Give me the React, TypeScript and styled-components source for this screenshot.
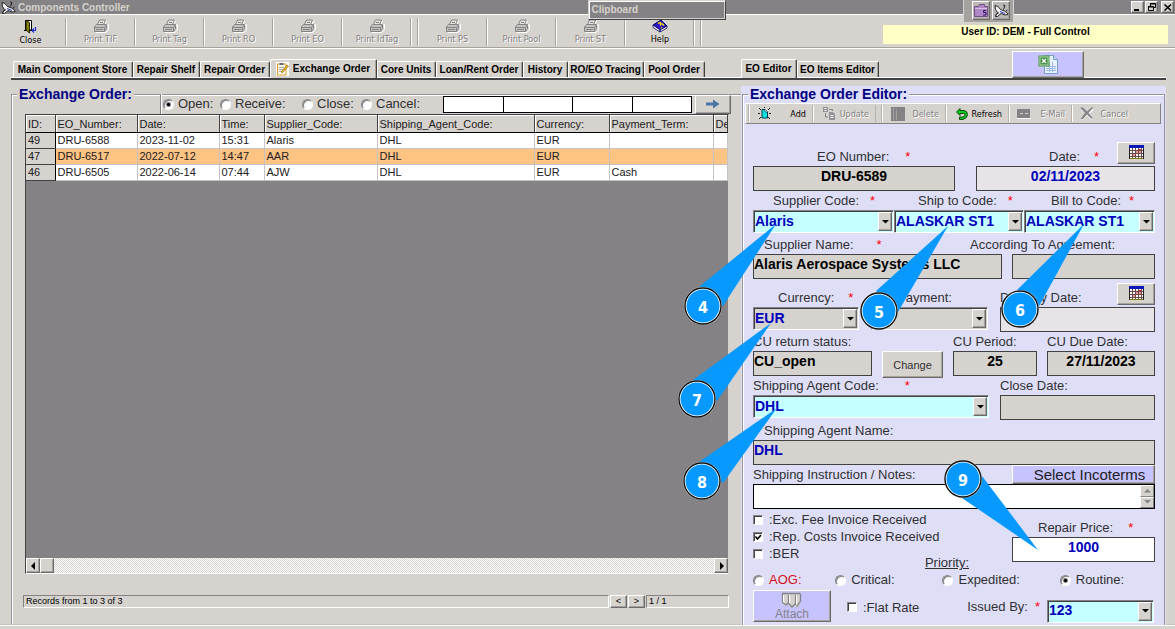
import React from "react";
import styled, { createGlobalStyle, css } from "styled-components";

const face = "#d6d3ce";
const shade = "#848284";
const dark = "#424142";
const lilac = "#dedff7";
const violet = "#c6c3ff";
const cyan = "#c6ffff";
const blue = "#0000bd";

const ui = `"DejaVu Sans Condensed", "DejaVu Sans", sans-serif`;
const sans = `"Liberation Sans", Arial, sans-serif`;

const GlobalStyle = createGlobalStyle`
  *, *::before, *::after { box-sizing: border-box; }
  body { margin: 0; background: ${face}; font-family: ${sans}; color: #000; }
  button, input, select, textarea { font: inherit; color: inherit; margin: 0; border-radius: 0; }
`;

const raised = css`
  border: 1px solid;
  border-color: #fff #6b696b #6b696b #fff;
  box-shadow: inset -1px -1px #a5a29c;
`;

const sunken = css`
  border: 1px solid;
  border-color: ${shade} #fff #fff ${shade};
`;

/* ---------- window frame ---------- */

const Page = styled.div`
  position: relative;
  display: flex;
  flex-direction: column;
  min-height: 100vh;
  overflow: hidden;
`;

const TitleBar = styled.header`
  display: flex;
  align-items: center;
  height: 15px;
  padding: 0 1px;
  gap: 2px;
  background: ${shade};
  border-bottom: 1px solid #fff;
  color: ${face};
  font: bold 10px/13px ${sans};
`;

const Title = styled.h1`
  flex: 1;
  margin: 0;
  font: inherit;
`;

const WindowButton = styled.button<{ $gap?: boolean }>`
  ${raised}
  display: grid;
  place-items: center;
  width: 13px;
  height: 12px;
  padding: 0;
  margin-left: ${(p) => (p.$gap ? 2 : 0)}px;
  margin-right: ${(p) => (p.$gap ? 0 : -1)}px;
  background: ${face};
`;

const Clipboard = styled.div`
  position: absolute;
  top: 0;
  left: 50%;
  width: 138px;
  height: 20px;
  padding: 3px 3px;
  background: ${shade};
  border: 1px solid ${face};
  border-right-color: ${dark};
  border-bottom-color: ${dark};
  box-shadow: inset 1px 1px #fff, inset -1px -1px ${face};
  color: ${face};
  font: bold 10px/12px ${sans};
`;

const QuickBar = styled.div`
  position: absolute;
  top: 0;
  right: 161px;
  display: flex;
  gap: 2px;
  height: 22px;
  padding: 1px 3px 2px 8px;
  background: #a5a2a0;
  border-left: 1px solid ${face};
  border-right: 1px solid ${face};
`;

const QuickButton = styled.button`
  ${raised}
  display: grid;
  place-items: center;
  width: 18px;
  padding: 0;
  background: #bdb8b8;
`;

const Toolbar = styled.nav`
  display: flex;
  height: 34px;
  border-bottom: 1px solid #fff;
  box-shadow: inset 0 -1px #a5a29c;
`;

const ToolCell = styled.div<{ $first?: boolean; $double?: boolean }>`
  flex: none;
  display: flex;
  width: ${(p) => (p.$first ? 67 : p.$double ? 76 : 69)}px;
  height: 28px;
  margin-top: 3px;
  padding-right: ${(p) => (p.$first ? 5 : p.$double ? 7 : 1)}px;
  border-right: 1px solid #fff;
  box-shadow: inset -1px 0 #a5a29c;
`;

const ToolButton = styled.button<{ $double?: boolean }>`
  flex: 1;
  display: flex;
  flex-direction: column;
  align-items: center;
  padding: 1px 0 0;
  border: 0;
  background: none;
  font: 9px/12px ${ui};
  box-shadow: ${(p) => (p.$double ? `1px 0 #fff, inset -1px 0 #a5a29c` : "none")};
  &:disabled {
    color: ${shade};
    text-shadow: 1px 1px #fff;
  }
`;

const UserBadge = styled.div`
  flex: 0 1 285px;
  height: 19px;
  margin: 10px 7px 0 auto;
  background: #ffffc6;
  font: bold 10px/13px ${sans};
  text-align: center;
`;

/* ---------- tab strips ---------- */

const TabRow = styled.div`
  display: grid;
  grid-template-columns: 730fr 425fr;
  height: 31px;
  margin: 0 9px 0 11px;
  border-bottom: 2px solid ${dark};
  box-shadow: inset 0 -1px #fff;
`;

const TabStrip = styled.div<{ $indent?: number }>`
  display: flex;
  align-items: flex-end;
  min-width: 0;
  padding-left: ${(p) => p.$indent || 0}px;
`;

const Tab = styled.button<{ $w: number; $active?: boolean }>`
  flex: none;
  display: flex;
  align-items: center;
  justify-content: center;
  gap: 4px;
  width: ${(p) => p.$w}px;
  height: ${(p) => (p.$active ? 19 : 16)}px;
  margin-bottom: ${(p) => (p.$active ? 0 : 1)}px;
  padding: 0 1px 0 0;
  background: ${face};
  border: solid;
  border-width: 1px 1px 0 1px;
  border-color: #fff ${dark} #fff #fff;
  border-radius: 2px 2px 0 0;
  box-shadow: inset -1px 0 #a5a29c;
  font: bold 10px/12px ${sans};
  white-space: nowrap;
`;

const ExcelButton = styled.button`
  ${raised}
  display: grid;
  place-items: center;
  width: 72px;
  height: 27px;
  margin-left: auto;
  margin-right: 82px;
  padding: 0;
  background: ${violet};
`;

/* ---------- main split ---------- */

const Main = styled.main`
  flex: 1;
  display: grid;
  grid-template-columns: 730fr 425fr;
  margin: 0 9px 0 11px;
  padding-top: 6px;
`;

const Footer = styled.footer`
  height: 4px;
  border-top: 1px solid #fff;
  box-shadow: 0 -1px #c6c3bd;
`;

const Group = styled.fieldset<{ $open?: boolean }>`
  display: flex;
  flex-direction: column;
  min-width: 0;
  margin: 0;
  padding: 0;
  border: 1px solid #949294;
  border-bottom: 0;
  border-right-width: ${(p) => (p.$open ? 0 : 1)}px;
  box-shadow: inset 1px 1px #fff;
`;

const Legend = styled.legend<{ $bg: string }>`
  margin-left: 5px;
  padding: 0 2px;
  background: ${(p) => p.$bg};
  color: #000084;
  font: bold 14px/16px ${sans};
`;

/* ---------- order list ---------- */

const FilterBar = styled.div`
  display: flex;
  align-items: center;
  height: 20px;
  margin: -8px 10px 0 148px;
  padding-left: 2px;
  border-left: 1px solid ${shade};
  box-shadow: inset 1px 0 #fff;
`;

const FilterOption = styled.label<{ $w: number }>`
  flex: none;
  display: flex;
  align-items: center;
  gap: 4px;
  width: ${(p) => p.$w}px;
  font: 13px/18px ${sans};
  color: #313031;
`;

const Radio = styled.input.attrs({ type: "radio" })`
  appearance: none;
  flex: none;
  width: 11px;
  height: 11px;
  border: 1px solid;
  border-color: ${shade} #fff #fff ${shade};
  border-radius: 50%;
  background: #fff;
  box-shadow: inset 1px 1px ${shade};
  &:checked {
    background: radial-gradient(circle, #000 0 1px, #fff 3px);
  }
`;

const FilterInputs = styled.div`
  flex: 1;
  display: grid;
  grid-template-columns: 60fr 70fr 60fr 60fr;
  height: 17px;
  border: 1px solid #000;
  margin: 1px 3px 0 0;
`;

const FilterInput = styled.input`
  width: 100%;
  min-width: 0;
  height: 15px;
  padding: 0 2px;
  border: 0;
  background: #fff;
  font-size: 11px;
  & + & {
    border-left: 1px solid #000;
  }
`;

const GoButton = styled.button`
  ${raised}
  display: grid;
  place-items: center;
  flex: none;
  width: 36px;
  height: 19px;
  padding: 0;
  background: ${face};
`;

const GridFrame = styled.div`
  flex: 1;
  display: flex;
  flex-direction: column;
  margin: 0 12px 0 13px;
  background: ${shade};
  border: 1px solid;
  border-color: ${dark} ${face} #fff ${dark};
`;

const GridBody = styled.div`
  flex: 1;
  overflow: hidden;
`;

const Table = styled.table`
  width: 100%;
  table-layout: fixed;
  border-collapse: collapse;
  font: 11px/14px ${sans};
  color: #212021;
`;

const HeadCell = styled.th`
  height: 17px;
  padding: 1px 0 0 2px;
  overflow: hidden;
  text-align: left;
  font-weight: normal;
  white-space: nowrap;
  background: ${face};
  border-right: 1px solid ${dark};
  border-bottom: 1px solid #000;
  box-shadow: inset 1px 1px #fff;
`;

const Row = styled.tr<{ $selected?: boolean }>`
  background: ${(p) => (p.$selected ? "#ffc384" : "#fff")};
`;

const Cell = styled.td`
  height: 16px;
  padding: 0 0 0 2px;
  border-right: 1px solid #c6c3c6;
  border-bottom: 1px solid #c6c3c6;
  white-space: nowrap;
  &:first-child {
    background: ${face};
    border-right-color: #000;
    border-bottom-color: ${dark};
  }
`;

const ScrollBar = styled.div`
  display: flex;
  height: 15px;
  background: repeating-conic-gradient(#fff 0 25%, ${face} 0 50%) 0 0 / 2px 2px;
`;

const ScrollButton = styled.button<{ $last?: boolean }>`
  ${raised}
  display: grid;
  place-items: center;
  width: 14px;
  height: 15px;
  padding: 0;
  margin-left: ${(p) => (p.$last ? "auto" : 0)};
  background: ${face};
`;

const StatusRow = styled.div`
  display: flex;
  gap: 1px;
  height: 13px;
  margin: 21px 12px 17px 11px;
  font: 9px/11px ${sans};
`;

const StatusBox = styled.div<{ $w?: number }>`
  ${sunken}
  flex: ${(p) => (p.$w ? `0 0 ${p.$w}px` : "1")};
  padding-left: 2px;
`;

const PageButton = styled.button`
  ${raised}
  width: 17px;
  padding: 0;
  background: ${face};
  font: 9px/9px ${sans};
`;

/* ---------- editor ---------- */

const EditorPanel = styled.section`
  position: relative;
  display: flex;
  flex-direction: column;
  min-width: 0;
  padding: 0 1px;
  background: ${lilac};
  & > fieldset {
    flex: 1;
  }
`;

const EditorBar = styled.div`
  display: flex;
  align-items: center;
  height: 21px;
  margin: 1px 3px 0 2px;
  padding-left: 2px;
  background: ${face};
  border: 1px solid;
  border-color: #fff ${shade} ${shade} #fff;
`;

const EditorTool = styled.button<{ $w: number; $gap: number }>`
  flex: none;
  display: flex;
  align-items: center;
  justify-content: flex-end;
  gap: ${(p) => p.$gap}px;
  width: ${(p) => p.$w}px;
  height: 17px;
  padding: 0 6px 0 0;
  border: 0;
  border-left: 1px solid #b5b2ad;
  box-shadow: inset 1px 0 #fff;
  background: none;
  font: 9px/12px ${ui};
  &:disabled {
    color: ${shade};
    text-shadow: 1px 1px #fff;
  }
`;

const BarGap = styled.span`
  width: 6px;
  height: 17px;
  border-left: 1px solid #b5b2ad;
`;

const Form = styled.div`
  display: flex;
  flex-direction: column;
  margin: 23px 9px 0 10px;
`;

const FormRow = styled.div<{ $cols: string; $gap?: number; $top?: number }>`
  display: grid;
  grid-template-columns: ${(p) => p.$cols};
  column-gap: ${(p) => p.$gap || 0}px;
  margin-top: ${(p) => p.$top || 0}px;
`;

const Field = styled.div`
  display: flex;
  flex-direction: column;
  min-width: 0;
`;

const LabelLine = styled.div<{ $indent?: number; $right?: number }>`
  display: flex;
  align-items: flex-end;
  justify-content: ${(p) => (p.$right === undefined ? "flex-start" : "flex-end")};
  height: 19px;
  padding-left: ${(p) => p.$indent || 0}px;
  padding-right: ${(p) => p.$right || 0}px;
  white-space: nowrap;
`;

const Label = styled.label`
  font: 13px/18px ${sans};
  color: #313031;
`;

const Star = styled.span<{ $gap: number }>`
  margin-left: ${(p) => p.$gap}px;
  color: #ff0000;
  font: 13px/18px ${sans};
`;

const TextBox = styled.input<{ $bg?: string; $ink?: string; $center?: boolean }>`
  width: 100%;
  height: 25px;
  padding: 0 0 5px 0;
  background: ${(p) => p.$bg || face};
  border: 1px solid ${dark};
  color: ${(p) => p.$ink || "#000"};
  font: bold 14px/18px ${sans};
  text-align: ${(p) => (p.$center ? "center" : "left")};
`;

const Combo = styled.div<{ $bg?: string }>`
  display: grid;
  height: 23px;
  margin-bottom: 2px;
  background: ${(p) => p.$bg || face};
  border: 1px solid;
  border-color: ${shade} #fff #fff ${shade};
  box-shadow: inset 1px 1px ${dark};
  & > * {
    grid-area: 1 / 1;
  }
`;

const Select = styled.select`
  appearance: none;
  width: 100%;
  height: 21px;
  padding: 0 16px 2px 1px;
  border: 0;
  background: none;
  color: ${blue};
  font: bold 14px/18px ${sans};
`;

const ComboArrow = styled.span`
  ${raised}
  justify-self: end;
  display: grid;
  place-items: center;
  width: 14px;
  height: 19px;
  margin: 1px 1px 0 0;
  background: ${face};
  pointer-events: none;
`;

const CalendarButton = styled.button`
  ${raised}
  flex: none;
  display: grid;
  place-items: center;
  width: 38px;
  height: 22px;
  margin: 0 0 2px auto;
  padding: 0 0 2px;
  background: ${face};
`;

const ChangeButton = styled.button`
  ${raised}
  align-self: end;
  height: 27px;
  margin-bottom: -2px;
  padding: 0;
  background: ${face};
  color: #313031;
  font: 11px/14px ${sans};
`;

const IncotermsButton = styled.button`
  ${raised}
  height: 19px;
  padding: 0 0 0 12px;
  background: ${violet};
  color: #212021;
  font: 15px/16px ${sans};
`;

const NotesBox = styled.div`
  display: flex;
  height: 25px;
  background: #fff;
  border: 1px solid #000;
`;

const Notes = styled.textarea`
  flex: 1;
  min-width: 0;
  padding: 1px 2px;
  border: 0;
  resize: none;
  background: none;
  font-size: 11px;
  overflow: hidden;
`;

const Spinner = styled.div`
  display: grid;
  grid-template-rows: 1fr 1fr;
  width: 14px;
  background: ${face};
`;

const SpinButton = styled.button`
  display: grid;
  place-items: center;
  padding: 0;
  background: ${face};
  border: 1px solid;
  border-color: #fff ${shade} ${shade} #fff;
`;

const Options = styled.div`
  padding-top: 2px;
`;

const CheckLine = styled.div`
  display: flex;
  align-items: flex-start;
`;

const Check = styled.label`
  display: flex;
  align-items: center;
  gap: 6px;
  height: 17px;
  color: #313031;
  font: 13px/17px ${sans};
  white-space: nowrap;
`;

const CheckBox = styled.input.attrs({ type: "checkbox" })`
  appearance: none;
  flex: none;
  width: 10px;
  height: 10px;
  background: #fff;
  border: 1px solid;
  border-color: ${shade} #fff #fff ${shade};
  box-shadow: inset 1px 1px ${dark};
  &:checked {
    background: #fff
      url("data:image/svg+xml,%3Csvg xmlns='http://www.w3.org/2000/svg' viewBox='0 0 8 8'%3E%3Cpath d='M1.5 3.5 3.5 6 7 2' fill='none' stroke='%23000' stroke-width='1.7'/%3E%3C/svg%3E");
  }
`;

const PriorityTitle = styled.span`
  margin: 9px 0 0 auto;
  padding-right: 43px;
  font: 13px/17px ${sans};
  color: #313031;
  text-decoration: underline;
`;

const PriorityRow = styled.div`
  display: grid;
  grid-template-columns: 82fr 107fr 117fr 95fr;
`;

const PriorityOption = styled.label<{ $ink?: string }>`
  display: flex;
  align-items: center;
  gap: 5px;
  height: 18px;
  color: ${(p) => p.$ink || "#313031"};
  font: 13px/18px ${sans};
`;

const LastRow = styled.div`
  display: flex;
  align-items: center;
  height: 34px;
  margin-top: 1px;
`;

const AttachButton = styled.button`
  ${raised}
  flex: none;
  display: flex;
  flex-direction: column;
  align-items: center;
  width: 78px;
  height: 32px;
  margin: 0 16px 2px 0;
  padding: 1px 0 0;
  background: ${violet};
  color: ${shade};
  font: 12px/11px ${sans};
`;

const IssuedBy = styled.div`
  display: flex;
  align-items: flex-end;
  margin-left: auto;
  & > ${Combo} {
    width: 107px;
    margin: 8px 1px 0 7px;
  }
  & > label, & > ${Star} {
    margin-bottom: 7px;
  }
`;

const Callouts = styled.svg`
  position: absolute;
  top: 0;
  left: 0;
  overflow: visible;
  pointer-events: none;
  font: bold 16px ${ui};
`;

/* ---------- icons ---------- */

const PlaneIcon = ({ size = 15 }: { size?: number }) => (
  <svg width={size} height={size - 2} viewBox="0 0 15 13">
    <path d="M1 1.500l3 1 2.500 3 4 1.500 3 2 .5 1.500-3 .5-4-1.500-3.500 3-2 0 2-4-2-3z" fill="#f4f4f4" stroke="#222" />
    <path d="M9 1l2 .5-1.500 4M1 11.500l4-3M12 7l1.500-1" stroke="#222" fill="none" />
    <path d="M6 7.500l5 2" stroke="#2030c0" />
  </svg>
);

const DoorIcon = () => (
  <svg width="13" height="15" viewBox="0 0 13 15">
    <path d="M1.500 1.500h6v9.500h-6z" fill="#fff" stroke="#000" />
    <path d="M2 1l3.500 2.500V14L2 11z" fill="#848200" stroke="#000" strokeWidth=".8" />
    <path d="M0 11.500h2M6 11.500h2.500" stroke="#000" />
    <path d="M11.500 8v3.500H8.500M10 9.500l-2 2 2 2" fill="none" stroke="#2030c8" strokeWidth="1.200" />
  </svg>
);

const PrinterIcon = () => (
  <svg width="16" height="14" viewBox="0 0 16 14">
    <g transform="translate(1 1)" fill="none" stroke="#fff">
      <path d="M4.500 5l2-4h6l-2 4M2 7.500l2-2h9l1.500-1v5l-2.500 3h-10z" />
    </g>
    <path d="M4.500 5.500l2-4.500h6l-2 4.500" fill="#e7e3de" stroke={shade} />
    <path d="M1.500 7.500l2-2h10v4l-2 3h-10z" fill="#c6c3bd" stroke={shade} />
    <path d="M2 8.500h9.500l2-2.500M3 10.500h7M11.500 8.500v4M7 3.500h3" fill="none" stroke={shade} />
  </svg>
);

const HelpIcon = () => (
  <svg width="16" height="14" viewBox="0 0 16 14">
    <path d="M1 6l8-5 6 6-7 4z" fill="#2a18c8" stroke="#000060" />
    <path d="M1 6v2.500l7 4.500v-2zM8 11l7-4v2l-7 4z" fill="#fff" stroke="#000060" strokeWidth=".8" />
    <path d="M6 4.500q3-2 3 .3 0 1-1 1.700M9 8.500l.8.800M10 4.500l2 2" fill="none" stroke="#ffe800" strokeWidth="1.400" />
  </svg>
);

const NoteIcon = () => (
  <svg width="13" height="14" viewBox="0 0 13 14">
    <rect x="0" y="0" width="13" height="14" fill="#fff" />
    <rect x="1.500" y="2" width="8.500" height="11" fill="#fffbe8" stroke="#d89a30" />
    <rect x="3.500" y="1" width="4" height="2" fill="#667" />
    <path d="M3 5.500h5M3 7.500h4M3 9.500h3" stroke="#aaa" />
    <path d="M5 10l6-7 1.500 1.200-6 6.500z" fill="#e8b830" stroke="#8a5a10" strokeWidth=".6" />
  </svg>
);

const ExcelIcon = () => (
  <svg width="21" height="21" viewBox="0 0 21 21">
    <path d="M6.500 1.500h9l4 4v14h-13z" fill="#e8f0fc" stroke="#7a9cc8" />
    <path d="M15.500 1.500v4h4" fill="#c4d8f4" stroke="#7a9cc8" />
    <path d="M8 12.500h10M8 14.500h10M8 16.500h10M11.500 8v10M14.500 8v10" stroke="#9ab8e0" />
    <rect x="1" y="2" width="10" height="10" fill="#b8d8b0" stroke="#4c9a48" />
    <rect x="2.500" y="3.500" width="7" height="7" fill="#3c8a3c" />
    <path d="M4 5l4 4M8 5l-4 4" stroke="#fff" strokeWidth="1.400" />
  </svg>
);

const ArrowIcon = () => (
  <svg width="14" height="10" viewBox="0 0 14 10">
    <path d="M0 3.500h7V0.500l6.500 4.500L7 9.500v-3H0z" fill="#4a75a5" />
  </svg>
);

const AddIcon = () => (
  <svg width="13" height="13" viewBox="0 0 13 13">
    <path d="M1 1l2 2M12 1l-2 2M0 6.500h2M11 6.500h2M1 12l2-2M12 12l-2-2M6.500 0v1" stroke="#222" />
    <path d="M4 2.500h3l2.500 2.500v6H4z" fill="#10e0e0" stroke="#003c50" />
    <path d="M7 2.500v2.500h2.500" fill="#fff" stroke="#003c50" strokeWidth=".7" />
  </svg>
);

const UpdateIcon = () => (
  <svg width="13" height="13" viewBox="0 0 13 13">
    <path d="M0 0h5v5H0zM6 5h4l2 2v6H6z" fill="#949294" />
    <path d="M1.500 1.500h2M1.500 3.500h2M7.500 8.500h3M7.500 10.500h3" stroke="#fff" />
    <path d="M6 2.500h3.500V4M2.500 6v4H5" fill="none" stroke={shade} />
  </svg>
);

const DeleteIcon = () => (
  <svg width="14" height="14" viewBox="0 0 14 14">
    <rect width="14" height="14" fill={shade} />
    <path d="M2.500 1v12M5.500 4v9M5 2.500h1" stroke="#a5a29c" />
  </svg>
);

const RefreshIcon = () => (
  <svg width="12" height="12" viewBox="0 0 12 12">
    <path d="M4 .5v2h4q3.500.5 3.500 4t-4.500 5H3.500V9H7q2-.5 2-2.200T7 5.500H4v2L.5 4z" fill="#10c820" stroke="#003c00" strokeWidth=".9" />
  </svg>
);

const MailIcon = () => (
  <svg width="14" height="10" viewBox="0 0 14 10">
    <rect width="13" height="9" fill={shade} />
    <path d="M3 4.500h3M8 4.500h3" stroke={face} />
    <path d="M0 9.500h14" stroke="#fff" />
  </svg>
);

const CrossIcon = () => (
  <svg width="14" height="13" viewBox="0 0 14 13">
    <path d="M2 2l10 10M13 2L2 12" stroke="#fff" strokeWidth="2" />
    <path d="M0 .5h3L7 4.500 11.500.5H13.500L8.500 6l4.500 5.500h-2L7 7.500 3 12H.5L5 6z" fill={shade} />
  </svg>
);

const CalendarIcon = () => (
  <svg width="15" height="14" viewBox="0 0 15 14">
    <rect x=".5" y=".5" width="14" height="13" fill="#fff" stroke="#222" />
    <rect width="15" height="3" fill="#0818b8" />
    <path d="M1 5.500h13M1 8.500h13M1 11.500h13M3.500 3v10M6.500 3v10M9.500 3v10M12.500 3v10" stroke="#6a4a4a" />
    <path d="M7 7h2M10 7h2M4 10h2M10 4.500h2" stroke="#e02020" />
    <path d="M1 13.500h13" stroke="#847c00" />
  </svg>
);

const AttachIcon = () => (
  <svg width="24" height="17" viewBox="0 0 24 17">
    <path d="M2 1h19v9l-4 6-3-3-3 3-3-4-3 2-3-3z" fill="#d6d3ce" />
    <path d="M2.500 11V1.500h18M8.500 3v8M15.500 3v10M20.500 2v7l-4 6M3 11l3 2 2-2 4 4 3-3" fill="none" stroke={shade} strokeWidth="1.300" />
    <path d="M9.500 3v8M16.500 3v9M3.500 3v7" stroke="#fff" />
  </svg>
);

const Tri = ({ dir, dim }: { dir: "left" | "right" | "down" | "up"; dim?: boolean }) => {
  const d = { left: "M5 0v8L1 4z", right: "M2 0v8l4-4z", down: "M0 2h7L3.500 5.500z", up: "M0 5.500h7L3.500 2z" }[dir];
  return (
    <svg width="7" height="8" viewBox="0 0 7 8">
      <path d={d} fill={dim ? shade : "#000"} />
    </svg>
  );
};

/* ---------- data ---------- */

const tools = [
  { name: "Print TIF" },
  { name: "Print Tag" },
  { name: "Print RO" },
  { name: "Print EO" },
  { name: "Print IdTag", double: true },
  { name: "Print PS" },
  { name: "Print Pool" },
  { name: "Print ST" },
];

const tabs = [
  { name: "Main Component Store", w: 120 },
  { name: "Repair Shelf", w: 67 },
  { name: "Repair Order", w: 70 },
  { name: "Exchange Order", w: 107, active: true },
  { name: "Core Units", w: 59 },
  { name: "Loan/Rent Order", w: 87 },
  { name: "History", w: 45 },
  { name: "RO/EO Tracing", w: 76 },
  { name: "Pool Order", w: 61 },
];

const columns = [
  { name: "ID:", w: 29 },
  { name: "EO_Number:", w: 82 },
  { name: "Date:", w: 82 },
  { name: "Time:", w: 45 },
  { name: "Supplier_Code:", w: 113 },
  { name: "Shipping_Agent_Code:", w: 157 },
  { name: "Currency:", w: 75 },
  { name: "Payment_Term:", w: 104 },
  { name: "De" },
];

const rows = [
  ["49", "DRU-6588", "2023-11-02", "15:31", "Alaris", "DHL", "EUR", "", ""],
  ["47", "DRU-6517", "2022-07-12", "14:47", "AAR", "DHL", "EUR", "", ""],
  ["46", "DRU-6505", "2022-06-14", "07:44", "AJW", "DHL", "EUR", "Cash", ""],
];

const callouts = [
  { n: 4, c: [-38, 220], wedge: "-42,201 35,138 -18,220" },
  { n: 5, c: [138, 225], wedge: "135,205 207,140 157,226" },
  { n: 6, c: [279, 223], wedge: "276,204 343,138 297,222" },
  { n: 7, c: [-44, 313], wedge: "-48,294 30,237 -24,315" },
  { n: 8, c: [-39, 395], wedge: "-42,376 36,322 -18,397" },
  { n: 9, c: [222, 393], wedge: "241,390 297,464 221,412" },
];

/* ---------- composed parts ---------- */

type CaptionProps = {
  id: string;
  text: string;
  indent?: number;
  right?: number;
  star?: number;
  children?: React.ReactNode;
};

const Caption = ({ id, text, indent, right, star, children }: CaptionProps) => (
  <LabelLine $indent={indent} $right={right}>
    <Label htmlFor={id}>{text}</Label>
    {star !== undefined && <Star $gap={star}>*</Star>}
    {children}
  </LabelLine>
);

const ComboBox = ({ id, value, bg }: { id: string; value: string; bg?: string }) => (
  <Combo $bg={bg}>
    <Select id={id} defaultValue={value}>
      <option>{value}</option>
    </Select>
    <ComboArrow>
      <Tri dir="down" />
    </ComboArrow>
  </Combo>
);

const OrderList = () => (
  <Group $open>
    <Legend $bg={face}>Exchange Order:</Legend>
    <FilterBar>
      <FilterOption $w={57}><Radio name="state" defaultChecked />Open:</FilterOption>
      <FilterOption $w={82}><Radio name="state" />Receive:</FilterOption>
      <FilterOption $w={59}><Radio name="state" />Close:</FilterOption>
      <FilterOption $w={82}><Radio name="state" />Cancel:</FilterOption>
      <FilterInputs>
        {["Number", "Supplier", "Agent", "Currency"].map((n) => (
          <FilterInput key={n} aria-label={n} />
        ))}
      </FilterInputs>
      <GoButton aria-label="Search"><ArrowIcon /></GoButton>
    </FilterBar>
    <GridFrame>
      <GridBody>
        <Table>
          <colgroup>
            {columns.map((c) => (
              <col key={c.name} width={c.w} />
            ))}
          </colgroup>
          <thead>
            <tr>{columns.map((c) => <HeadCell key={c.name}>{c.name}</HeadCell>)}</tr>
          </thead>
          <tbody>
            {rows.map((r, i) => (
              <Row key={r[0]} $selected={i === 1}>
                {r.map((v, j) => <Cell key={j}>{v}</Cell>)}
              </Row>
            ))}
          </tbody>
        </Table>
      </GridBody>
      <ScrollBar>
        <ScrollButton aria-label="Scroll left"><Tri dir="left" /></ScrollButton>
        <ScrollButton aria-label="Scroll thumb" />
        <ScrollButton $last aria-label="Scroll right"><Tri dir="right" /></ScrollButton>
      </ScrollBar>
    </GridFrame>
    <StatusRow>
      <StatusBox>Records from 1 to 3 of 3</StatusBox>
      <PageButton>&lt;</PageButton>
      <PageButton>&gt;</PageButton>
      <StatusBox $w={83}>1 / 1</StatusBox>
    </StatusRow>
  </Group>
);

const Editor = () => (
  <EditorPanel>
    <Group>
      <Legend $bg={lilac}>Exchange Order Editor:</Legend>
      <EditorBar>
        <EditorTool $w={64} $gap={19}><AddIcon />Add</EditorTool>
        <EditorTool $w={63} $gap={4} disabled><UpdateIcon />Update</EditorTool>
        <BarGap />
        <EditorTool $w={64} $gap={7} disabled><DeleteIcon />Delete</EditorTool>
        <EditorTool $w={63} $gap={3}><RefreshIcon />Refresh</EditorTool>
        <EditorTool $w={63} $gap={10} disabled><MailIcon />E-Mail</EditorTool>
        <EditorTool $w={63} $gap={7} disabled><CrossIcon />Cancel</EditorTool>
      </EditorBar>
      <Form>
        <FormRow $cols="202fr 179fr" $gap={21}>
          <Field>
            <Caption id="eo" text="EO Number:" indent={64} star={16} />
            <TextBox id="eo" $center defaultValue="DRU-6589" />
          </Field>
          <Field>
            <Caption id="date" text="Date:" indent={73} star={14}>
              <CalendarButton aria-label="Pick date"><CalendarIcon /></CalendarButton>
            </Caption>
            <TextBox id="date" $center $bg="#e7e3e7" $ink={blue} defaultValue="02/11/2023" />
          </Field>
        </FormRow>
        <FormRow $cols="141fr 130fr 131fr">
          <Field>
            <Caption id="supplier" text="Supplier Code:" indent={20} star={11} />
            <ComboBox id="supplier" value="Alaris" bg={cyan} />
          </Field>
          <Field>
            <Caption id="ship" text="Ship to Code:" indent={24} star={11} />
            <ComboBox id="ship" value="ALASKAR ST1" bg={cyan} />
          </Field>
          <Field>
            <Caption id="bill" text="Bill to Code:" indent={27} star={8} />
            <ComboBox id="bill" value="ALASKAR ST1" bg={cyan} />
          </Field>
        </FormRow>
        <FormRow $cols="249fr 143fr" $gap={10}>
          <Field>
            <Caption id="sname" text="Supplier Name:" indent={11} star={23} />
            <TextBox id="sname" defaultValue="Alaris Aerospace Systems LLC" />
          </Field>
          <Field>
            <Caption id="agree" text="According To Agreement:" right={40} />
            <TextBox id="agree" />
          </Field>
        </FormRow>
        <FormRow $cols="106fr 117fr 155fr" $gap={12} $top={9}>
          <Field>
            <Caption id="currency" text="Currency:" indent={25} star={14} />
            <ComboBox id="currency" value="EUR" />
          </Field>
          <Field>
            <Caption id="payment" text="Payment:" indent={26} />
            <ComboBox id="payment" value="" />
          </Field>
          <Field>
            <Caption id="delivery" text="Delivery Date:">
              <CalendarButton aria-label="Pick delivery date"><CalendarIcon /></CalendarButton>
            </Caption>
            <TextBox id="delivery" $bg="#e7e3e7" />
          </Field>
        </FormRow>
        <FormRow $cols="119fr 61fr 84fr 108fr" $gap={10}>
          <Field>
            <Caption id="status" text="CU return status:" />
            <TextBox id="status" defaultValue="CU_open" />
          </Field>
          <ChangeButton>Change</ChangeButton>
          <Field>
            <Caption id="period" text="CU Period:" />
            <TextBox id="period" $center defaultValue="25" />
          </Field>
          <Field>
            <Caption id="due" text="CU Due Date:" />
            <TextBox id="due" $center defaultValue="27/11/2023" />
          </Field>
        </FormRow>
        <FormRow $cols="236fr 155fr" $gap={11}>
          <Field>
            <Caption id="agent" text="Shipping Agent Code:" star={26} />
            <ComboBox id="agent" value="DHL" bg={cyan} />
          </Field>
          <Field>
            <Caption id="close" text="Close Date:" />
            <TextBox id="close" />
          </Field>
        </FormRow>
        <FormRow $cols="1fr" $top={1}>
          <Field>
            <Caption id="aname" text="Shipping Agent Name:" indent={11} />
            <TextBox id="aname" $ink={blue} defaultValue="DHL" />
          </Field>
        </FormRow>
        <FormRow $cols="259fr 143fr">
          <Caption id="notes" text="Shipping Instruction / Notes:" />
          <IncotermsButton>Select Incoterms</IncotermsButton>
        </FormRow>
        <NotesBox>
          <Notes id="notes" />
          <Spinner>
            <SpinButton aria-label="Scroll up"><Tri dir="up" dim /></SpinButton>
            <SpinButton aria-label="Scroll down"><Tri dir="down" dim /></SpinButton>
          </Spinner>
        </NotesBox>
        <FormRow $cols="259fr 143fr">
          <Options>
            <Check><CheckBox />:Exc. Fee Invoice Received</Check>
            <Check><CheckBox defaultChecked />:Rep. Costs Invoice Received</Check>
            <CheckLine>
              <Check><CheckBox />:BER</Check>
              <PriorityTitle>Priority:</PriorityTitle>
            </CheckLine>
          </Options>
          <Field>
            <FormRow $cols="1fr" $top={9}>
              <Caption id="price" text="Repair Price:" indent={26} star={15} />
              <TextBox id="price" $center $bg="#fff" $ink={blue} defaultValue="1000" />
            </FormRow>
          </Field>
        </FormRow>
        <PriorityRow>
          <PriorityOption $ink="#d61020"><Radio name="priority" />AOG:</PriorityOption>
          <PriorityOption><Radio name="priority" />Critical:</PriorityOption>
          <PriorityOption><Radio name="priority" />Expedited:</PriorityOption>
          <PriorityOption><Radio name="priority" defaultChecked />Routine:</PriorityOption>
        </PriorityRow>
        <LastRow>
          <AttachButton><AttachIcon />Attach</AttachButton>
          <Check><CheckBox />:Flat Rate</Check>
          <IssuedBy>
            <Label htmlFor="issued">Issued By:</Label>
            <Star $gap={7}>*</Star>
            <ComboBox id="issued" value="123" bg={cyan} />
          </IssuedBy>
        </LastRow>
      </Form>
    </Group>
    <Callouts width="1" height="1">
      {callouts.map(({ n, c: [x, y], wedge }) => (
        <g key={n}>
          <polygon points={wedge} fill="#0899ff" />
          <circle cx={x} cy={y} r="19" fill="#e8e8e8" />
          <circle cx={x} cy={y} r="18" fill="#fff" stroke="#101010" strokeWidth="1.400" />
          <circle cx={x} cy={y} r="16.500" fill="#0899ff" />
          <text x={x} y={y + 7} textAnchor="middle" fill="#fff">{n}</text>
        </g>
      ))}
    </Callouts>
  </EditorPanel>
);

export default function App() {
  return (
    <Page>
      <GlobalStyle />
      <TitleBar>
        <PlaneIcon />
        <Title>Components Controller</Title>
        <WindowButton aria-label="Minimize">
          <svg width="7" height="7"><path d="M0 6h5" stroke="#000" strokeWidth="2" /></svg>
        </WindowButton>
        <WindowButton aria-label="Restore">
          <svg width="8" height="8"><path d="M2.500 3V.5h5v4H6M.5 3.500h5v4h-5zM2 1h6M0 4h6" fill="none" stroke="#000" /></svg>
        </WindowButton>
        <WindowButton $gap aria-label="Close window">
          <svg width="8" height="7"><path d="M.5.5l6.500 6M7 .5l-6.500 6" stroke="#000" strokeWidth="1.500" /></svg>
        </WindowButton>
      </TitleBar>
      <Clipboard>Clipboard</Clipboard>
      <QuickBar>
        <QuickButton aria-label="Folder">
          <svg width="14" height="13" viewBox="0 0 14 13">
            <path d="M.5 2.500h4l1-2h5v2h3v10H.5z" fill="#b088c8" stroke="#705080" />
            <path d="M1 4.500h12" stroke="#d8c0e8" />
            <path d="M12 6.500H9.500v2H12v2.500H9" fill="none" stroke="#301060" />
          </svg>
        </QuickButton>
        <QuickButton aria-label="Aircraft"><PlaneIcon /></QuickButton>
      </QuickBar>
      <Toolbar>
        <ToolCell $first><ToolButton><DoorIcon />Close</ToolButton></ToolCell>
        {tools.map((t) => (
          <ToolCell key={t.name} $double={t.double}>
            <ToolButton disabled $double={t.double}><PrinterIcon />{t.name}</ToolButton>
          </ToolCell>
        ))}
        <ToolCell $double><ToolButton $double><HelpIcon />Help</ToolButton></ToolCell>
        <UserBadge>User ID: DEM - Full Control</UserBadge>
      </Toolbar>
      <TabRow>
        <TabStrip role="tablist" $indent={2}>
          {tabs.map((t) => (
            <Tab key={t.name} role="tab" $w={t.w} $active={t.active}>
              {t.active && <NoteIcon />}
              {t.name}
            </Tab>
          ))}
        </TabStrip>
        <TabStrip role="tablist">
          <Tab role="tab" $w={56} $active>EO Editor</Tab>
          <Tab role="tab" $w={82}>EO Items Editor</Tab>
          <ExcelButton aria-label="Export to Excel"><ExcelIcon /></ExcelButton>
        </TabStrip>
      </TabRow>
      <Main>
        <OrderList />
        <Editor />
      </Main>
      <Footer />
    </Page>
  );
}
